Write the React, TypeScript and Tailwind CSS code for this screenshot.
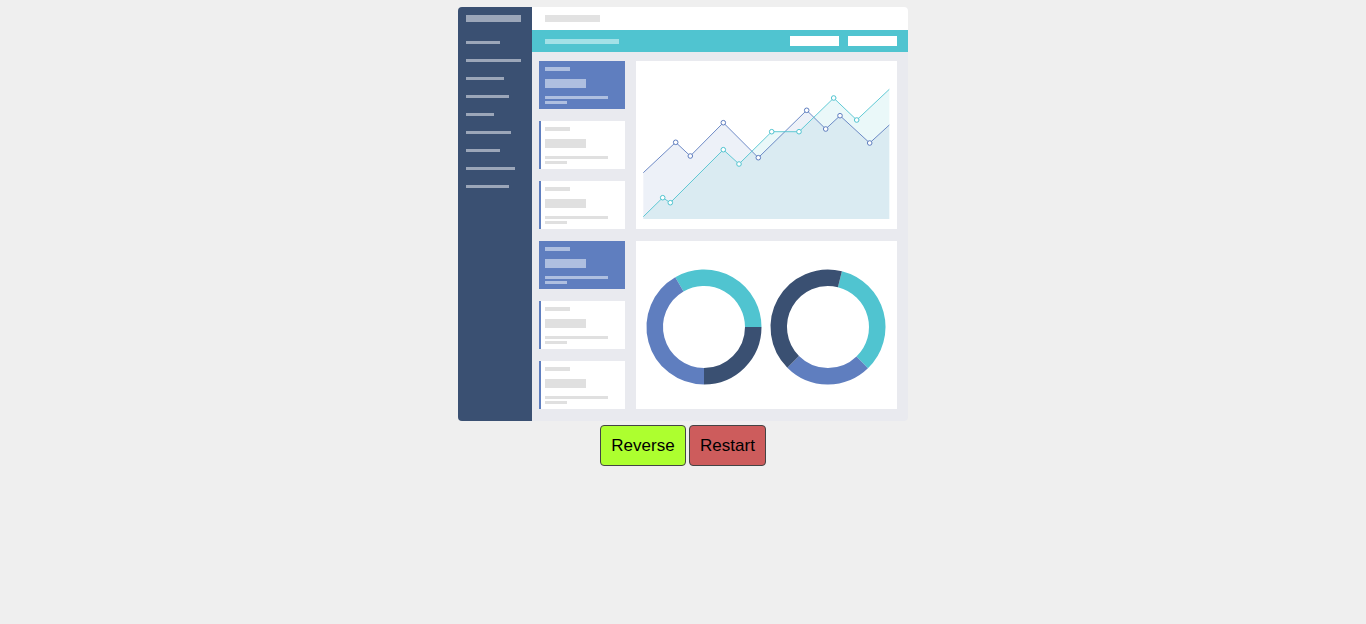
import React from "react";

const BLUE = "#5f7ebf";
const TEAL = "#50c4d0";
const NAVY = "#3a5072";

const bluePts: [number, number][] = [
  [7.3, 111.7], [39.7, 81.3], [54.3, 95], [87.3, 61.7], [122.3, 96.7],
  [170.7, 49.3], [189.7, 68], [204, 54.7], [233.7, 82], [253.3, 64],
];
const tealPts: [number, number][] = [
  [7.3, 155.7], [26.7, 136.7], [34.3, 141.7], [87.3, 88.7], [103, 103],
  [135.7, 70.7], [163, 70.7], [197.7, 37], [220.7, 59], [253.3, 28.3],
];
const BOTTOM = 158;

function area(pts: [number, number][]) {
  const first = pts[0];
  const last = pts[pts.length - 1];
  return (
    pts.map((p) => `${p[0]},${p[1]}`).join(" ") +
    ` ${last[0]},${BOTTOM} ${first[0]},${BOTTOM}`
  );
}
function line(pts: [number, number][]) {
  return pts.map((p) => `${p[0]},${p[1]}`).join(" ");
}

function LineChart() {
  return (
    <svg width="261" height="168" viewBox="0 0 261 168" className="block">
      <polygon points={area(bluePts)} fill={BLUE} fillOpacity={0.11} />
      <polygon points={area(tealPts)} fill={TEAL} fillOpacity={0.12} />
      <polyline points={line(bluePts)} fill="none" stroke={BLUE} strokeWidth={0.9} />
      <polyline points={line(tealPts)} fill="none" stroke={TEAL} strokeWidth={0.9} />
      {bluePts.slice(1, -1).map((p, i) => (
        <circle key={"b" + i} cx={p[0]} cy={p[1]} r={2.3} fill="#ffffff" stroke={BLUE} strokeWidth={1} />
      ))}
      {tealPts.slice(1, -1).map((p, i) => (
        <circle key={"t" + i} cx={p[0]} cy={p[1]} r={2.3} fill="#ffffff" stroke={TEAL} strokeWidth={1} />
      ))}
    </svg>
  );
}

function arc(cx: number, cy: number, r: number, a0: number, a1: number) {
  const rad = (a: number) => (a * Math.PI) / 180;
  const x0 = cx + r * Math.sin(rad(a0));
  const y0 = cy - r * Math.cos(rad(a0));
  const x1 = cx + r * Math.sin(rad(a1));
  const y1 = cy - r * Math.cos(rad(a1));
  const large = a1 - a0 > 180 ? 1 : 0;
  return `M ${x0} ${y0} A ${r} ${r} 0 ${large} 1 ${x1} ${y1}`;
}

function Donut({ cx, segs }: { cx: number; segs: [number, number, string][] }) {
  return (
    <>
      {segs.map(([a0, a1, c], i) => (
        <path key={i} d={arc(cx, 86, 49.25, a0, a1)} fill="none" stroke={c} strokeWidth={16.5} />
      ))}
    </>
  );
}

function Donuts() {
  return (
    <svg width="261" height="168" viewBox="0 0 261 168" className="block">
      <Donut cx={68} segs={[[-30, 90, TEAL], [90, 180, NAVY], [180, 330, BLUE]]} />
      <Donut cx={192} segs={[[14, 136, TEAL], [136, 225, BLUE], [225, 374, NAVY]]} />
    </svg>
  );
}

function Card({ active }: { active?: boolean }) {
  const ph = active ? "bg-[#aebfe0]" : "bg-[#e0e0e0]";
  return (
    <div
      className={
        active
          ? "h-[48px] w-[86px] bg-[#5f7ebf] pl-[6px] pt-[6px] flex flex-col"
          : "h-[48px] w-[86px] bg-white border-l-2 border-[#5f7ebf] pl-[4px] pt-[6px] flex flex-col"
      }
    >
      <div className={`h-[4px] w-[25px] ${ph}`} />
      <div className={`mt-[8px] h-[9px] w-[41px] ${ph}`} />
      <div className={`mt-[8px] h-[3px] w-[63px] ${ph}`} />
      <div className={`mt-[2px] h-[3px] w-[22px] ${ph}`} />
    </div>
  );
}

const sideWidths = [34, 55, 38, 43, 28, 45, 34, 49, 43];

export default function App() {
  return (
    <div
      className="min-h-[624px] bg-[#efefef] flex flex-col items-center pt-[7px]"
      style={{ fontFamily: '"Liberation Sans", Arial, sans-serif' }}
    >
      <div className="w-[450px] h-[414px] flex rounded-[4px] overflow-hidden">
        <div className="w-[74px] bg-[#3a5072] pl-[8px] pt-[8px] flex flex-col">
          <div className="h-[7px] w-[55px] bg-[#9ba6b9]" />
          <div className="mt-[19px] flex flex-col gap-[15px]">
            {sideWidths.map((w, i) => (
              <div key={i} className="h-[3px] bg-[#9ba6b9]" style={{ width: w }} />
            ))}
          </div>
        </div>
        <div className="flex-1 bg-[#e9eaef] flex flex-col">
          <div className="h-[23px] bg-white pl-[13px] pt-[8px]">
            <div className="h-[7px] w-[55px] bg-[#e2e2e2]" />
          </div>
          <div className="h-[22px] bg-[#50c4d0] flex items-center pl-[13px] pr-[11px]">
            <div className="h-[5px] w-[74px] bg-[#a3e1e7]" />
            <div className="ml-auto flex gap-[9px]">
              <div className="h-[10px] w-[49px] bg-white" />
              <div className="h-[10px] w-[49px] bg-white" />
            </div>
          </div>
          <div className="flex pl-[7px] pt-[9px] gap-[11px]">
            <div className="flex flex-col gap-[12px]">
              <Card active />
              <Card />
              <Card />
              <Card active />
              <Card />
              <Card />
            </div>
            <div className="flex flex-col gap-[12px]">
              <div className="bg-white w-[261px] h-[168px]">
                <LineChart />
              </div>
              <div className="bg-white w-[261px] h-[168px]">
                <Donuts />
              </div>
            </div>
          </div>
        </div>
      </div>
      <div className="mt-[4px] flex gap-[3px]">
        <button className="h-[41px] w-[86px] bg-[#adff2f] border border-[#444] rounded-[4px] text-[17px] text-black">
          Reverse
        </button>
        <button className="h-[41px] w-[77px] bg-[#cd5c5c] border border-[#444] rounded-[4px] text-[17px] text-black">
          Restart
        </button>
      </div>
    </div>
  );
}
